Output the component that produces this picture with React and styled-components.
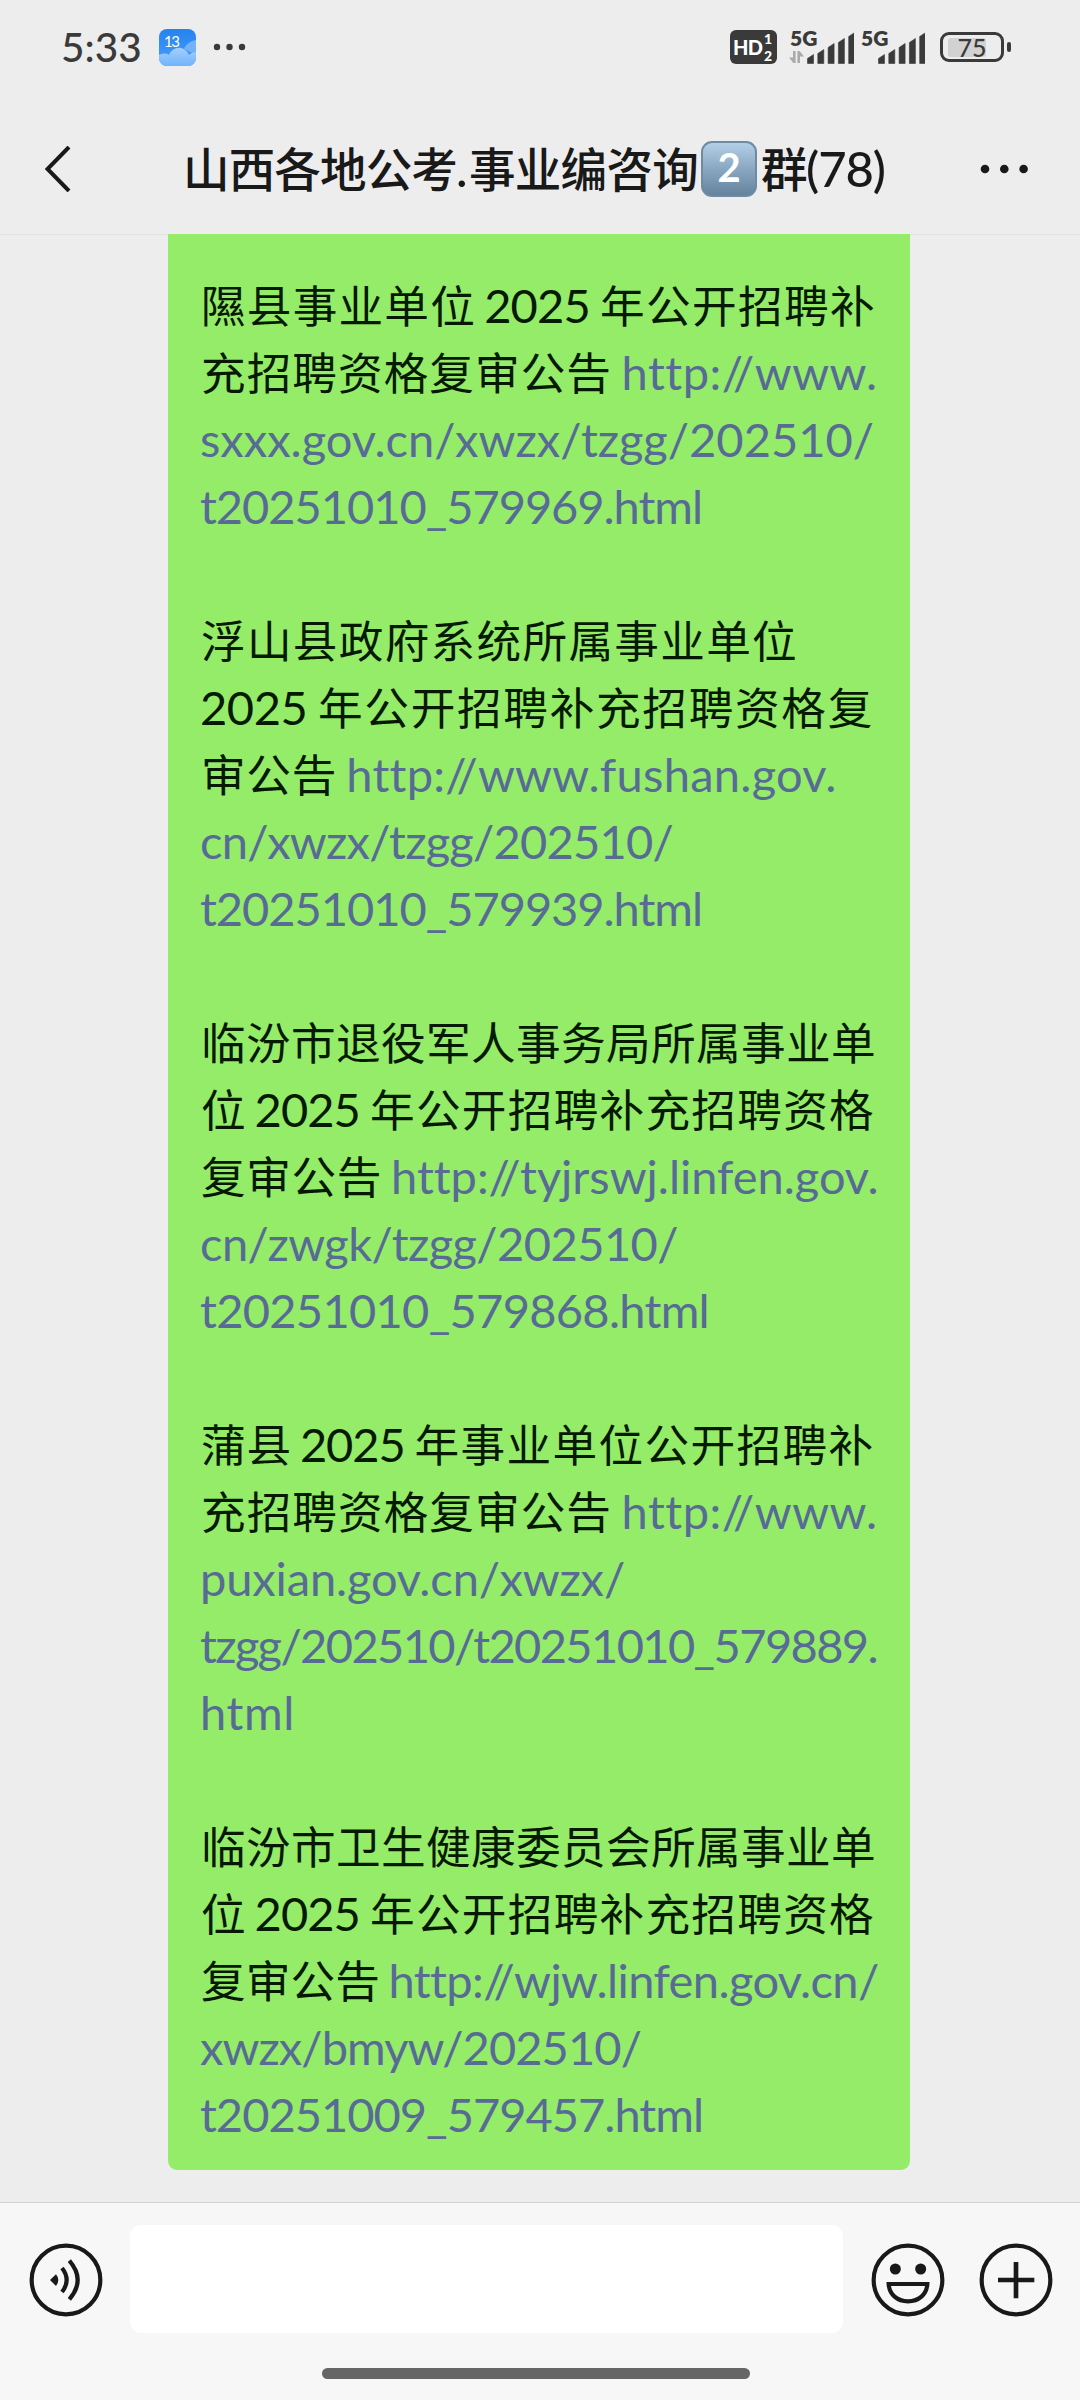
import React, { useLayoutEffect, useRef, useState } from 'react';
import styled, { createGlobalStyle } from 'styled-components';

// one entry per message line: [text, width in px, isLink]
const MESSAGE = [
  [['隰县事业单位', 275], [' 2025 ', 124], ['年公开招聘补', 276]],
  [['充招聘资格复审公告', 411], [' http://www.', 265, true]],
  [['sxxx.gov.cn/xwzx/tzgg/202510/', 674, true]],
  [['t20251010_579969.html', 502, true]],
  [],
  [['浮山县政府系统所属事业单位', 597]],
  [['2025 ', 117], ['年公开招聘补充招聘资格复', 556]],
  [['审公告', 136], [' http://www.fushan.gov.', 499, true]],
  [['cn/xwzx/tzgg/202510/', 473, true]],
  [['t20251010_579939.html', 502, true]],
  [],
  [['临汾市退役军人事务局所属事业单', 675]],
  [['位', 45.5], [' 2025 ', 123.5], ['年公开招聘补充招聘资格', 505]],
  [['复审公告', 181], [' http://tyjrswj.linfen.gov.', 496, true]],
  [['cn/zwgk/tzgg/202510/', 478, true]],
  [['t20251010_579868.html', 509, true]],
  [],
  [['蒲县', 91], [' 2025 ', 122.5], ['年事业单位公开招聘补', 460]],
  [['充招聘资格复审公告', 411], [' http://www.', 265, true]],
  [['puxian.gov.cn/xwzx/', 425, true]],
  [['tzgg/202510/t20251010_579889.', 677, true]],
  [['html', 95, true]],
  [],
  [['临汾市卫生健康委员会所属事业单', 675]],
  [['位', 45.5], [' 2025 ', 123.5], ['年公开招聘补充招聘资格', 505]],
  [['复审公告', 179], [' http://wjw.linfen.gov.cn/', 498, true]],
  [['xwzx/bmyw/202510/', 441, true]],
  [['t20251009_579457.html', 503, true]],
];

const BARS = [8, 13, 19, 24, 30];

// Spreads the letters of a run evenly over the given width
const Run = ({ text, width, link }) => {
  const ref = useRef(null);
  const [spacing, setSpacing] = useState(0);

  useLayoutEffect(() => {
    const natural = ref.current.getBoundingClientRect().width - spacing * text.length;
    setSpacing((width - natural) / text.length);
  }, [text, width]);

  return (
    <RunText
      ref={ref}
      as={link ? 'a' : 'span'}
      $link={link}
      $cjk={/[\u4e00-\u9fff]/.test(text)}
      style={{ letterSpacing: `${spacing}px` }}
    >
      {text}
    </RunText>
  );
};

const Signal = ({ data }) => (
  <SignalBox>
    <SignalName>5G</SignalName>
    <svg width="66" height="36" viewBox="0 0 66 36">
      {data && (
        <path d="M5 22h2.6v12H5.4L1 28.5h4zM9.4 34V22h2.2L16 27.5h-4V34z" fill="#aaaaaa" />
      )}
      {BARS.map((h, i) => (
        <path
          key={h}
          d={`M${19.5 + i * 10.3} 34.5v${-(h - 3)}l6 -4v${h + 1}z`}
          fill="#3a3a3a"
          stroke="#3a3a3a"
          strokeWidth="0.6"
          strokeLinejoin="round"
        />
      ))}
    </svg>
  </SignalBox>
);

const StatusBar = () => (
  <Status>
    <Time>5:33</Time>
    <Weather>
      <svg width="37" height="37" viewBox="0 0 37 37">
        <defs>
          <linearGradient id="sky" x1="0" y1="0" x2="0" y2="1">
            <stop offset="0" stopColor="#2483ef" />
            <stop offset="1" stopColor="#4ba0fb" />
          </linearGradient>
          <linearGradient id="cloud" x1="0" y1="0" x2="0" y2="1">
            <stop offset="0" stopColor="#a5cffa" />
            <stop offset="1" stopColor="#6fb4fd" />
          </linearGradient>
        </defs>
        <rect width="37" height="37" rx="8" fill="url(#sky)" />
        <path d="M37 11c-6 1-10 4-12 9l12 6z" fill="#74b2f6" />
        <path
          d="M0 26c4-2 8-2 10 0 2-5 7-8 12-7 4 1 7 4 8 7 2-2 5-3 7-3v6a8 8 0 0 1-8 8H8a8 8 0 0 1-8-8z"
          fill="url(#cloud)"
        />
      </svg>
      <Degrees>13</Degrees>
    </Weather>
    <svg width="34" height="8" viewBox="0 0 34 8">
      <circle cx="4" cy="4" r="3.2" fill="#3a3a3a" />
      <circle cx="16.5" cy="4" r="3.2" fill="#3a3a3a" />
      <circle cx="29" cy="4" r="3.2" fill="#3a3a3a" />
    </svg>
    <Spacer />
    <HdBadge>
      HD
      <HdLines>
        <span>1</span>
        <span>2</span>
      </HdLines>
    </HdBadge>
    <Signal data />
    <Signal />
    <Battery>
      <BatteryLevel />
      <BatteryText>75</BatteryText>
    </Battery>
    <BatteryTip />
  </Status>
);

const App = () => (
  <Screen>
    <GlobalStyle />
    <StatusBar />
    <Header>
      <svg width="26" height="46" viewBox="0 0 26 46">
        <path d="M24 1L2.5 23L24 45" fill="none" stroke="#191919" strokeWidth="4" />
      </svg>
      <Title>
        <Run text="山西各地公考" width={274} />
        <Run text="." width={12} />
        <Run text="事业编咨询" width={229} />
        <Keycap>2</Keycap>
        <Run text="群" width={46} />
        <Run text="(78)" width={79} />
      </Title>
      <svg width="48" height="10" viewBox="0 0 48 10">
        <circle cx="5" cy="5" r="4.3" fill="#191919" />
        <circle cx="24.3" cy="5" r="4.3" fill="#191919" />
        <circle cx="43.6" cy="5" r="4.3" fill="#191919" />
      </svg>
    </Header>
    <Chat>
      <Bubble>
        {MESSAGE.map((runs, i) => (
          <Line key={i}>
            {runs.map(([text, width, link], j) => (
              <Run key={j} text={text} width={width} link={link} />
            ))}
          </Line>
        ))}
      </Bubble>
    </Chat>
    <Footer>
      <InputRow>
        <RoundIcon viewBox="-111 -111 222 222">
          <circle r="103" />
          <path d="M-48 0L-30 -17Q-16 0 -30 18Z" fill="#191919" stroke="none" />
          <path d="M-12 -36Q16 0 -12 36M10 -58Q60 0 10 58" />
        </RoundIcon>
        <Input />
        <RoundIcon viewBox="-111 -111 222 222">
          <circle r="103" />
          <circle cx="-38" cy="-33" r="16.5" fill="#191919" stroke="none" />
          <circle cx="38" cy="-33" r="16.5" fill="#191919" stroke="none" />
          <path d="M-58 12H58C56 44 32 64 0 64S-56 44 -58 12Z" />
        </RoundIcon>
        <RoundIcon viewBox="-111 -111 222 222">
          <circle r="103" />
          <path d="M-54 0H55M0 -54V55" strokeWidth="14" />
        </RoundIcon>
      </InputRow>
      <HomeBar />
    </Footer>
  </Screen>
);

const GlobalStyle = createGlobalStyle`
  body {
    margin: 0;
    background: #ededed;
  }

  * {
    box-sizing: border-box;
  }

  svg {
    display: block;
    flex-shrink: 0;
  }
`;

const Screen = styled.div`
  display: flex;
  flex-direction: column;
  width: 1080px;
  height: 2400px;
  overflow: hidden;
  background: #ededed;
  color: #191919;
  font-family: Lato, 'Noto Sans CJK SC', sans-serif;
`;

const Status = styled.div`
  display: flex;
  align-items: center;
  height: 94px;
  padding: 0 69px 0 61px;
  color: #3a3a3a;
`;

const Time = styled.div`
  width: 98px;
  font-size: 40.5px;
  font-weight: 500;
  line-height: 48px;
`;

const Weather = styled.div`
  position: relative;
  margin-right: 17px;
`;

const Degrees = styled.span`
  position: absolute;
  top: 4px;
  left: 5px;
  color: #fff;
  font-size: 15px;
  line-height: 16px;
  letter-spacing: -1.5px;
`;

const Spacer = styled.div`
  flex: 1;
`;

const HdBadge = styled.div`
  display: flex;
  align-items: center;
  width: 47px;
  height: 34px;
  margin-right: 11px;
  padding-left: 3px;
  border-radius: 6px;
  background: #3a3a3a;
  color: #fff;
  font-size: 20px;
  font-weight: 900;
  letter-spacing: -0.8px;
`;

const HdLines = styled.div`
  display: flex;
  flex-direction: column;
  margin-left: 2px;
  font-size: 14px;
  line-height: 17px;
`;

const SignalBox = styled.div`
  position: relative;
  width: 71px;
  height: 36px;
`;

const SignalName = styled.span`
  position: absolute;
  top: -3px;
  left: 2px;
  font-size: 21px;
  font-weight: 800;
  line-height: 24px;
`;

const Battery = styled.div`
  display: flex;
  align-items: center;
  position: relative;
  width: 64px;
  height: 30px;
  margin-left: 10px;
  padding-left: 5px;
  border: 3px solid #3a3a3a;
  border-radius: 9px;
`;

const BatteryLevel = styled.div`
  width: 38px;
  height: 19px;
  border-radius: 3px;
  background: #d2d2d2;
`;

const BatteryText = styled.span`
  position: absolute;
  inset: 0;
  font-size: 25px;
  font-weight: 500;
  line-height: 25px;
  text-align: center;
`;

const BatteryTip = styled.div`
  width: 4px;
  height: 10px;
  margin-left: 3px;
  border-radius: 2px;
  background: #3a3a3a;
`;

const Header = styled.header`
  display: flex;
  align-items: center;
  height: 141px;
  padding: 10px 52px 0 45px;
  border-bottom: 1px solid #e2e2e2;
`;

const Title = styled.h1`
  display: flex;
  flex: 1;
  align-items: baseline;
  height: 66px;
  margin: -3px 0 0;
  padding-left: 112px;
  font-size: 49px;
  font-weight: 500;
  line-height: 66px;
`;

const Keycap = styled.span`
  align-self: flex-start;
  width: 56px;
  height: 56px;
  margin: 6px 4px 0 3px;
  border: 2px solid #6f8ba3;
  border-radius: 11px;
  background: linear-gradient(#b3cfe6, #8dabc5 45%, #66839d);
  color: #fff;
  font-size: 40px;
  font-weight: 700;
  line-height: 49px;
  text-align: center;
`;

const RunText = styled.span`
  color: ${(p) => (p.$link ? '#576b95' : 'inherit')};
  font-family: ${(p) => (p.$cjk ? "'Noto Sans CJK SC', sans-serif" : 'Lato, sans-serif')};
  font-size: ${(p) => (p.$cjk ? '0.95em' : '1em')};
  line-height: ${(p) => (p.$cjk ? '1' : 'inherit')};
  margin: ${(p) => (p.$cjk ? '0' : '0 1px 0 -1px')};
  word-spacing: -2px;
  white-space: pre;
`;

const Chat = styled.main`
  flex: 1;
  padding: 0 170px 0 168px;
  margin-top: -1px;
`;

const Bubble = styled.div`
  height: 1936px;
  padding: 38px 0 0 33px;
  border-radius: 0 0 9px 9px;
  background: #95ec69;
  color: #061a02;
  font-size: 47px;
`;

const Line = styled.div`
  height: 67px;
  line-height: 67px;
  white-space: nowrap;
`;

const Footer = styled.footer`
  height: 198px;
  border-top: 1px solid #d2d2d2;
  background: #f7f7f7;
`;

const InputRow = styled.div`
  display: flex;
  align-items: center;
  height: 108px;
  margin-top: 22px;
  padding: 0 27.5px 0 28.5px;
`;

const RoundIcon = styled.svg`
  width: 74px;
  height: 74px;
  margin-top: 1px;
  fill: none;
  stroke: #191919;
  stroke-width: 12.5;

  & + & {
    margin-left: 34px;
  }
`;

const Input = styled.div`
  flex: 1;
  height: 108px;
  margin: 0 28px 0 27.5px;
  border-radius: 11px;
  background: #fff;
`;

const HomeBar = styled.div`
  width: 428px;
  height: 11px;
  margin: 35px 0 0 322px;
  border-radius: 6px;
  background: #666;
`;

export default App;
